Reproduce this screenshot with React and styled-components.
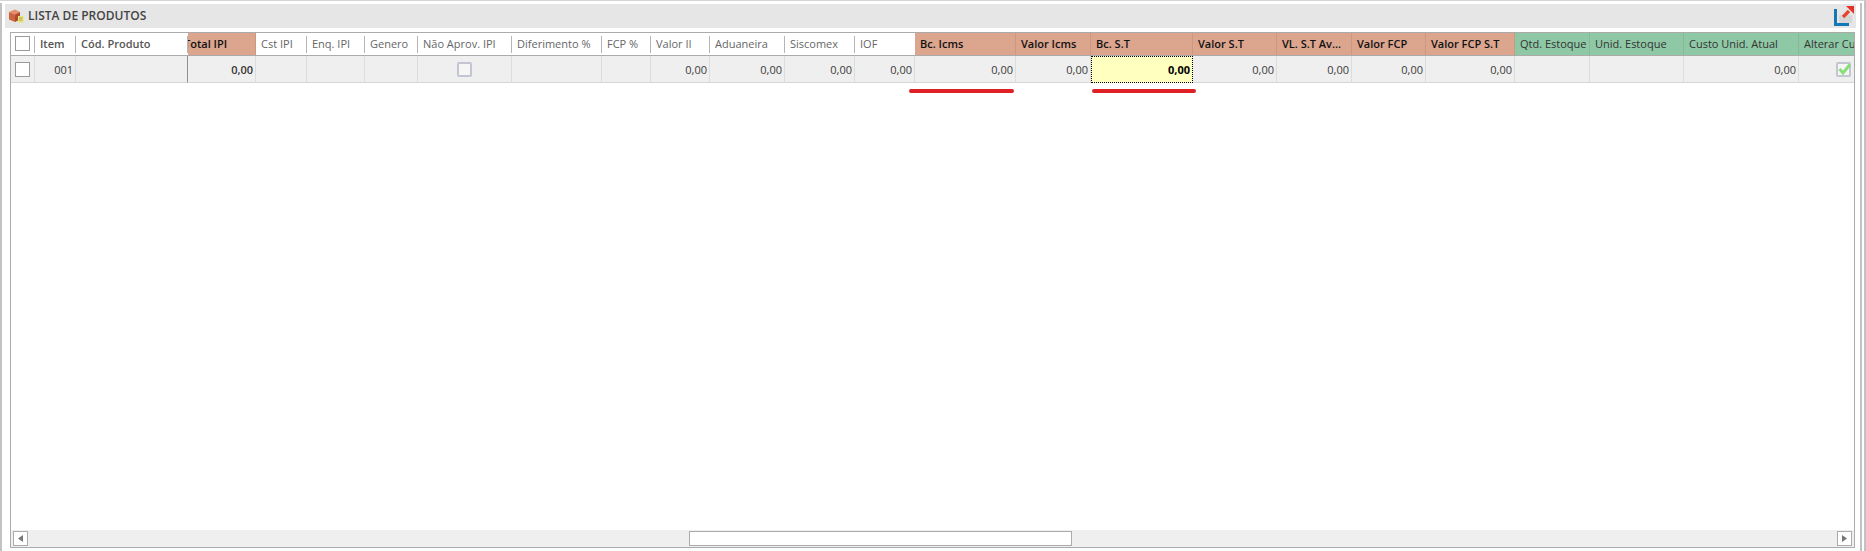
import React from "react";
import styled, { createGlobalStyle } from "styled-components";

const GlobalStyle = createGlobalStyle`
  html, body {
    margin: 0;
    padding: 0;
    background: #fff;
  }
  body {
    font-family: "Open Sans", "Liberation Sans", sans-serif;
    overflow: hidden;
  }
`;

const COLUMNS = [
  { key: "check", width: 25, kind: "check" },
  { key: "item", label: "Item", width: 41, bold: true },
  { key: "cod", label: "Cód. Produto", width: 112, bold: true, frozenEnd: true },
  { key: "totalIpi", label: "Total IPI", width: 68, tone: "red", value: "0,00", clip: true },
  { key: "cst", label: "Cst IPI", width: 51 },
  { key: "enq", label: "Enq. IPI", width: 58 },
  { key: "genero", label: "Genero", width: 53 },
  { key: "naoAprov", label: "Não Aprov. IPI", width: 94, kind: "box" },
  { key: "dif", label: "Diferimento %", width: 90 },
  { key: "fcp", label: "FCP %", width: 49 },
  { key: "ii", label: "Valor II", width: 59, value: "0,00" },
  { key: "adu", label: "Aduaneira", width: 75, value: "0,00" },
  { key: "sis", label: "Siscomex", width: 70, value: "0,00" },
  { key: "iof", label: "IOF", width: 60, value: "0,00" },
  { key: "bcIcms", label: "Bc. Icms", width: 101, tone: "red", value: "0,00" },
  { key: "vIcms", label: "Valor Icms", width: 75, tone: "red", value: "0,00" },
  { key: "bcSt", label: "Bc. S.T", width: 102, tone: "red", value: "0,00", focused: true },
  { key: "vSt", label: "Valor S.T", width: 84, tone: "red", value: "0,00" },
  { key: "vlSt", label: "VL. S.T Av...", width: 75, tone: "red", value: "0,00" },
  { key: "vFcp", label: "Valor FCP", width: 74, tone: "red", value: "0,00" },
  { key: "vFcpSt", label: "Valor FCP S.T", width: 89, tone: "red", value: "0,00" },
  { key: "qtd", label: "Qtd. Estoque", width: 75, tone: "green" },
  { key: "unid", label: "Unid. Estoque", width: 94, tone: "green" },
  { key: "custo", label: "Custo Unid. Atual", width: 115, tone: "green", value: "0,00" },
  { key: "alterar", label: "Alterar Custo", width: 56, tone: "green", kind: "checked" },
];

const template = COLUMNS.map((c) => `${c.width}px`).join(" ");

const Page = styled.div`
  position: relative;
  width: 1866px;
  height: 551px;
  box-sizing: border-box;
  padding: 2px 2px 0 0;
  background: #fff;
  border-top: 1px solid #d4d4d4;
  border-right: 2px solid #c2c2c2;
`;

const Frame = styled.section`
  height: 548px;
  box-sizing: border-box;
  border-left: 2px solid #c2c2c2;
  border-right: 2px solid #c2c2c2;
  padding: 1px 5px 0 3px;
  display: flex;
  flex-direction: column;
`;

const TitleBar = styled.header`
  height: 24px;
  margin-right: -1px;
  background: #e6e6e6;
  display: flex;
  align-items: center;
  padding: 0 2px 0 3px;
  gap: 4px;
  flex-shrink: 0;
`;

const Title = styled.h2`
  margin: 0 0 2px;
  flex: 1;
  font-size: 12px;
  font-weight: 600;
  color: #444;
`;

const GridBox = styled.div`
  margin: 4px 0 0 5px;
  width: 1845px;
  height: 516px;
  box-sizing: border-box;
  border: 1px solid #ababab;
  display: flex;
  flex-direction: column;
  background: #fff;
  overflow: hidden;
`;

const Row = styled.div`
  display: grid;
  grid-template-columns: ${template};
  flex-shrink: 0;
  margin-left: -1px;
`;

const Head = styled.div`
  height: 23px;
  box-sizing: border-box;
  display: flex;
  align-items: center;
  justify-content: ${(p) => (p.$center ? "center" : "flex-start")};
  padding: 0 0 1px ${(p) => (p.$center ? 0 : "5px")};
  font-size: 11px;
  white-space: nowrap;
  overflow: hidden;
  color: ${(p) => (p.$tone === "red" ? "#111" : p.$bold ? "#555" : p.$tone === "green" ? "#333" : "#666")};
  font-weight: ${(p) => (p.$tone === "red" || p.$bold ? 600 : 400)};
  background: ${(p) =>
    p.$tone === "red" ? "#dba58e" : p.$tone === "green" ? "#8fc8a5" : "#fff"};
  border-bottom: 1px solid #ababab;
  position: relative;

  ${(p) =>
    !p.$tone &&
    `&::after {
      content: "";
      position: absolute;
      right: 0;
      top: 3px;
      bottom: 2px;
      width: 1px;
      background: #b5b5b5;
    }`}

  ${(p) =>
    p.$tone &&
    `box-shadow: inset -1px 0 0 rgba(120, 100, 90, 0.18);`}

  ${(p) => p.$clip && `padding-left: 0; text-indent: -4px;`}
  ${(p) => p.$noLine && `&::after { display: none; }`}
`;

const Cell = styled.div`
  height: 27px;
  box-sizing: border-box;
  display: flex;
  align-items: center;
  justify-content: ${(p) => (p.$center ? "center" : "flex-end")};
  padding-right: ${(p) => (p.$center ? 0 : "2px")};
  font-size: 11px;
  color: #3a3a3a;
  background: #efefef;
  border-right: 1px solid #dcdcdc;
  border-bottom: 1px solid #d6d6d6;
  ${(p) => p.$frozenEnd && `border-right: 1px solid #8f8f8f;`}
  ${(p) => p.$strong && `font-weight: 600; color: #333;`}
  ${(p) =>
    p.$focused &&
    `background: #ffffbf;
     color: #000;
     font-weight: 700;
     border: 1px dotted #000;
     padding-right: 2px;`}
`;

const Body = styled.div`
  flex: 1;
  background: #fff;
`;

const ScrollBar = styled.div`
  height: 17px;
  flex-shrink: 0;
  background: #efefef;
  display: flex;
  align-items: center;
  padding: 0 2px;
`;

const ScrollButton = styled.button`
  width: 15px;
  height: 15px;
  padding: 0;
  border: 1px solid #ababab;
  background: #fff;
  display: flex;
  align-items: center;
  justify-content: center;
`;

const Track = styled.div`
  flex: 1;
  height: 100%;
  display: flex;
  align-items: center;
  padding-left: 661px;
`;

const Thumb = styled.div`
  width: 383px;
  height: 15px;
  box-sizing: border-box;
  border: 1px solid #ababab;
  background: #fff;
`;

const Underline = styled.div`
  position: absolute;
  top: 88px;
  left: ${(p) => p.$left}px;
  width: ${(p) => p.$width}px;
  height: 4px;
  border-radius: 2px;
  background: #de2127;
`;

const PlainBox = styled.span`
  display: block;
  width: 15px;
  height: 15px;
  box-sizing: border-box;
  border: 1px solid #9a9a9a;
  background: #fff;
`;

const SoftBox = styled.span`
  position: relative;
  display: block;
  width: 15px;
  height: 15px;
  box-sizing: border-box;
  border: 2px solid #c1c6d0;
  border-radius: 2px;
  background: #f6f6f6;
`;

const CheckSlot = styled.div`
  width: 100%;
  display: flex;
  justify-content: flex-end;
  padding-right: 3px;
  box-sizing: border-box;
`;

const BoxIcon = () => (
  <svg width="16" height="16" viewBox="0 0 16 16">
    <path d="M1 4 L7 1.5 L12 4 L7 6.5 Z" fill="#e5906a" />
    <path d="M1 4 L7 6.5 V14 L1 11.5 Z" fill="#cf6540" />
    <path d="M12 4 L7 6.5 V14 L12 11.5 Z" fill="#ad4c2a" />
    <rect x="10" y="8" width="5.5" height="6.5" fill="#e9e27a" />
    <path d="M11 10h3.5M11 12h3.5" stroke="#9aa04a" strokeWidth="0.8" />
  </svg>
);

const ExpandIcon = () => (
  <svg width="20" height="20" viewBox="0 0 20 20">
    <rect x="5" y="9" width="13" height="8" fill="#d6d6d6" />
    <path d="M1.5 3 V18.5 H15" fill="none" stroke="#1477b8" strokeWidth="3" />
    <path d="M9 11 L15 5" stroke="#e5432a" strokeWidth="3.2" />
    <path d="M12 0 H20 V8 Z" fill="#e5332a" />
  </svg>
);

const Check = () => (
  <SoftBox>
    <svg
      width="15"
      height="14"
      viewBox="0 0 15 14"
      style={{ position: "absolute", left: -1, top: -2 }}
    >
      <path d="M2.5 7 L6 11 L13 2.5" fill="none" stroke="#86e078" strokeWidth="3" />
    </svg>
  </SoftBox>
);

const Arrow = ({ left }) => (
  <svg width="5" height="7" viewBox="0 0 5 7">
    <path d={left ? "M5 0 V7 L0 3.5 Z" : "M0 0 V7 L5 3.5 Z"} fill="#777" />
  </svg>
);

const cellContent = (col) => {
  if (col.kind === "check") return <PlainBox />;
  if (col.kind === "box") return <SoftBox />;
  if (col.kind === "checked")
    return (
      <CheckSlot>
        <Check />
      </CheckSlot>
    );
  if (col.key === "item") return "001";
  return col.value || "";
};

export default function App() {
  return (
    <>
      <GlobalStyle />
      <Page>
        <Frame>
          <TitleBar>
            <BoxIcon />
            <Title>LISTA DE PRODUTOS</Title>
            <ExpandIcon />
          </TitleBar>
          <GridBox>
            <Row>
              {COLUMNS.map((col) => (
                <Head
                  key={col.key}
                  $tone={col.tone}
                  $bold={col.bold}
                  $clip={col.clip}
                  $center={col.kind === "check"}
                  $noLine={col.key === "iof"}
                >
                  {col.kind === "check" ? <PlainBox /> : col.label}
                </Head>
              ))}
            </Row>
            <Row>
              {COLUMNS.map((col) => (
                <Cell
                  key={col.key}
                  $center={col.kind === "check" || col.kind === "box" || col.kind === "checked"}
                  $frozenEnd={col.frozenEnd}
                  $strong={col.key === "totalIpi"}
                  $focused={col.focused}
                >
                  {cellContent(col)}
                </Cell>
              ))}
            </Row>
            <Body />
            <ScrollBar>
              <ScrollButton>
                <Arrow left />
              </ScrollButton>
              <Track>
                <Thumb />
              </Track>
              <ScrollButton>
                <Arrow />
              </ScrollButton>
            </ScrollBar>
          </GridBox>
        </Frame>
        <Underline $left={909} $width={105} />
        <Underline $left={1092} $width={104} />
      </Page>
    </>
  );
}
